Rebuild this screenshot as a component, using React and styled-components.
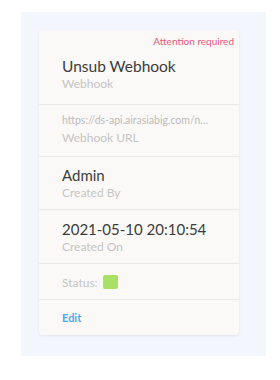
import React from "react";
import styled, { createGlobalStyle } from "styled-components";

const Global = createGlobalStyle`
  html, body { margin: 0; padding: 0; background: #ffffff; }
  body { font-family: Lato, "Open Sans", sans-serif; }
`;

const Panel = styled.div`
  margin: 12px 0 0 21px;
  width: 245px;
  height: 344px;
  box-sizing: border-box;
  padding: 18px 0 0 18px;
  background: #f3f7fd;
`;

const Card = styled.div`
  width: 200px;
  box-sizing: border-box;
  background: #faf9f8;
  border-radius: 4px;
  box-shadow: 0 1px 3px rgba(0, 0, 0, 0.08);
  display: flex;
  flex-direction: column;
`;

const Section = styled.div`
  padding: ${(p) => p.$pad || "8px 23px 8px"};
  border-top: ${(p) => (p.$first ? "none" : "1px solid #ebe9e7")};
  display: flex;
  flex-direction: column;
`;

const Attention = styled.div`
  align-self: flex-end;
  margin-right: -18px;
  font-size: 10px;
  line-height: 12px;
  color: #e8577d;
`;

const Value = styled.div`
  margin-top: ${(p) => p.$mt || 0}px;
  font-size: ${(p) => p.$size || 15}px;
  line-height: ${(p) => p.$lh || 20}px;
  color: ${(p) => p.$color || "#3c3c3c"};
  white-space: nowrap;
`;

const Label = styled.div`
  font-size: 12px;
  line-height: 16px;
  color: #c6c4c3;
`;

const StatusRow = styled.div`
  display: flex;
  align-items: center;
  gap: 5px;
  height: 18px;
`;

const StatusText = styled.span`
  font-size: 12px;
  color: #c6c4c3;
`;

const Dot = styled.span`
  width: 15px;
  height: 14px;
  border-radius: 2px;
  background: ${(p) => p.$color};
`;

const EditLink = styled.a`
  font-size: 11px;
  line-height: 18px;
  font-weight: 700;
  color: #4ea6f5;
  text-decoration: none;
  cursor: pointer;
`;

export default function App() {
  return (
    <>
      <Global />
      <Panel>
        <Card>
          <Section $first $pad="5px 23px 12px">
            <Attention>Attention required</Attention>
            <Value $mt={9} $size={15.5}>Unsub Webhook</Value>
            <Label>Webhook</Label>
          </Section>
          <Section $pad="5px 23px 10px">
            <Value $size={10.5} $lh={20} $color="#bdbbba">
              https://ds-api.airasiabig.com/n…
            </Value>
            <Label>Webhook URL</Label>
          </Section>
          <Section>
            <Value>Admin</Value>
            <Label>Created By</Label>
          </Section>
          <Section $pad="9px 23px 8px">
            <Value>2021-05-10 20:10:54</Value>
            <Label>Created On</Label>
          </Section>
          <Section $pad="9px 23px 8px">
            <StatusRow>
              <StatusText>Status:</StatusText>
              <Dot $color="#a8e068" />
            </StatusRow>
          </Section>
          <Section $pad="9px 23px 8px">
            <EditLink>Edit</EditLink>
          </Section>
        </Card>
      </Panel>
    </>
  );
}
